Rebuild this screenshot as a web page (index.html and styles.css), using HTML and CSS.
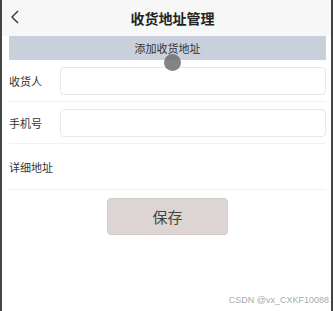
FILE: index.html
```html
<!DOCTYPE html>
<html lang="zh">
<head>
  <meta charset="UTF-8" />
  <meta name="viewport" content="width=device-width, initial-scale=1.0"/>
  <title>收货地址管理</title>
  <link rel="stylesheet" href="styles.css">
</head>
<body>
  <div class="page">
    <div class="header">
      <svg class="back" width="10" height="14" viewBox="0 0 10 14"><path d="M8 1 L2 7 L8 13" fill="none" stroke="#333" stroke-width="1.4"/></svg>
      <h2>收货地址管理</h2>
    </div>
    <div class="content">
      <div class="add-bar">添加收货地址<span class="touch"></span></div>
      <div class="row">
        <span class="label">收货人</span>
        <input type="text" class="field" />
      </div>
      <div class="row">
        <span class="label">手机号</span>
        <input type="text" class="field" />
      </div>
      <div class="row row-text">
        <span class="label">详细地址</span>
      </div>
      <div class="actions">
        <button class="save">保存</button>
      </div>
    </div>
    <div class="mark">CSDN @vx_CXKF10088</div>
  </div>
</body>
</html>
```

FILE: styles.css
```css
html, body {
  margin: 0;
  padding: 0;
  background: #fff;
}
.page {
  font-family: "Noto Sans CJK SC", "Liberation Sans", sans-serif;
  height: 311px;
  box-sizing: border-box;
  border-left: 2px solid #444;
  border-right: 2px solid #444;
  position: relative;
  color: #333;
}
.header {
  height: 36px;
  background: #f7f7f7;
  display: flex;
  align-items: center;
  justify-content: center;
  position: relative;
}
.header h2 {
  margin: 0;
  font-size: 14px;
  font-weight: bold;
  color: #222;
  padding-left: 12px;
}
.back {
  position: absolute;
  left: 8px;
  top: 10px;
}
.content {
  padding: 0 5px 0 7px;
}
.add-bar {
  height: 24px;
  line-height: 24px;
  background: #c9d0dc;
  text-align: center;
  font-size: 11px;
  color: #333;
  position: relative;
}
.touch {
  position: absolute;
  left: 155px;
  top: 18px;
  width: 17px;
  height: 17px;
  border-radius: 50%;
  background: rgba(110, 110, 110, 0.85);
}
.row {
  display: flex;
  align-items: center;
  height: 41px;
  border-bottom: 1px solid #f0f0f0;
}
.row:first-of-type {
  height: 42px;
}
.row-text {
  height: 45px;
}
.label {
  width: 51px;
  font-size: 11px;
  color: #333;
}
.field {
  flex: 1;
  height: 28px;
  box-sizing: border-box;
  border: 1px solid #e8e8e8;
  border-radius: 4px;
  background: #fff;
  margin-top: 1px;
}
.actions {
  display: flex;
  justify-content: center;
  padding-top: 8px;
}
.save {
  width: 121px;
  height: 37px;
  background: #ddd5d3;
  border: 1px solid #d4cac8;
  border-radius: 4px;
  font-family: "Noto Sans CJK SC", sans-serif;
  font-size: 15px;
  color: #444;
}
.mark {
  position: absolute;
  right: 2px;
  bottom: 6px;
  font-family: "Liberation Sans", sans-serif;
  font-size: 9px;
  color: #aaa;
}
```
